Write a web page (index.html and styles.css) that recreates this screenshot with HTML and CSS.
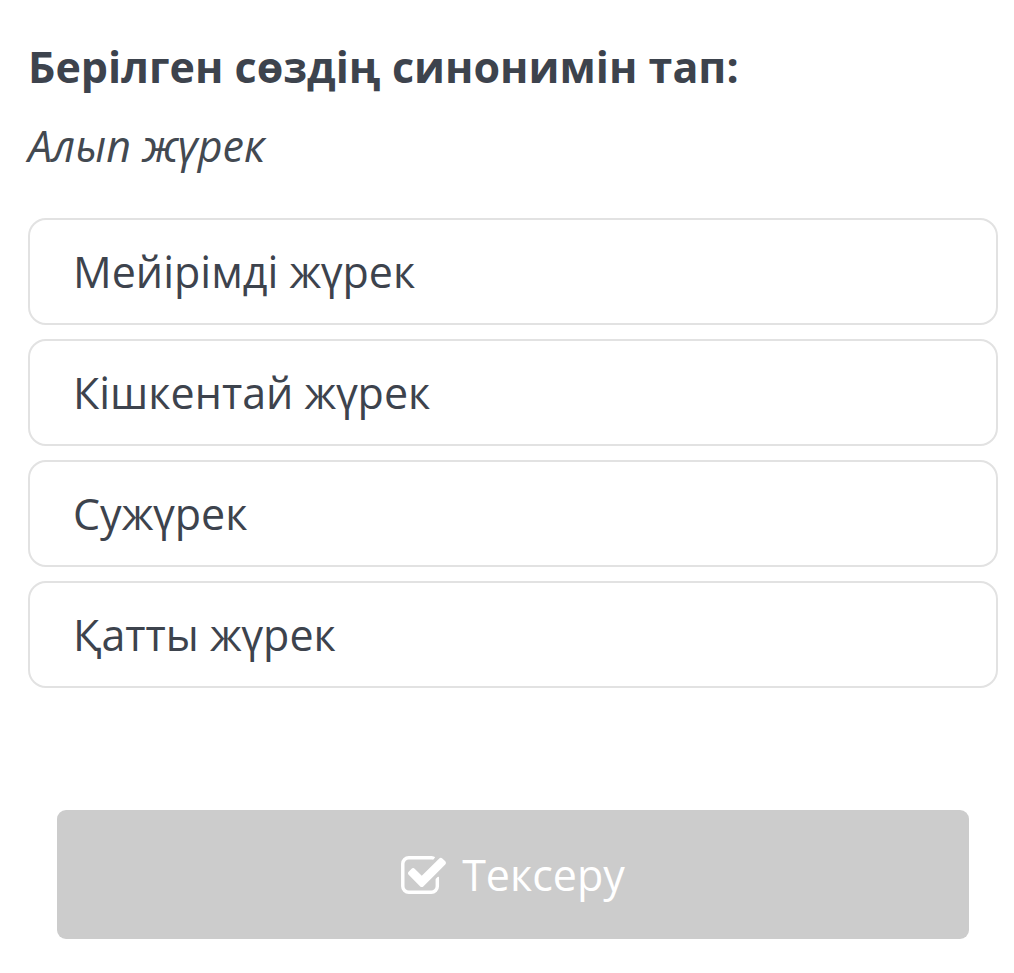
FILE: index.html
```html
<!DOCTYPE html>
<html lang="kk">
<head>
<meta charset="utf-8">
<link rel="stylesheet" href="styles.css">
</head>
<body>
<main class="quiz">
  <h1 class="title">Берілген сөздің синонимін тап:</h1>
  <p class="word">Алып жүрек</p>
  <ul class="options">
    <li class="option">Мейірімді жүрек</li>
    <li class="option">Кішкентай жүрек</li>
    <li class="option">Сужүрек</li>
    <li class="option">Қатты жүрек</li>
  </ul>
  <div class="actions">
    <button class="check" type="button">
      <svg class="check-icon" viewBox="64 128 1664 1408" width="45" height="38" aria-hidden="true">
        <path fill="#fff" d="M1472 930v318q0 119-84.5 203.5t-203.5 84.5h-832q-119 0-203.5-84.5t-84.5-203.5v-832q0-119 84.5-203.5t203.5-84.5h832q63 0 117 25 15 7 18 23 3 17-9 29l-49 49q-10 10-23 10-3 0-9-2-23-6-45-6h-832q-66 0-113 47t-47 113v832q0 66 47 113t113 47h832q66 0 113-47t47-113v-254q0-13 9-22l64-64q10-10 23-10 6 0 12 3 20 8 20 29zm231-489l-814 814q-24 24-57 24t-57-24l-430-430q-24-24-24-57t24-57l110-110q24-24 57-24t57 24l263 263 647-647q24-24 57-24t57 24l110 110q24 24 24 57t-24 57z"/>
      </svg>
      <span>Тексеру</span>
    </button>
  </div>
</main>
</body>
</html>
```
FILE: styles.css
```css
html, body {
  margin: 0;
  padding: 0;
  background: #ffffff;
}
body {
  font-family: "Open Sans", "Noto Sans", sans-serif;
  color: #3d434d;
}
.quiz {
  padding: 38px 16px 0 28px;
}
.title {
  margin: 0;
  font-size: 43px;
  font-weight: 700;
  line-height: 58px;
  color: #3d434d;
}
.word {
  margin: 21px 0 0;
  font-size: 43px;
  font-style: italic;
  font-weight: 400;
  line-height: 58px;
  color: #434951;
}
.options {
  list-style: none;
  margin: 43px 0 0;
  padding: 0;
  display: flex;
  flex-direction: column;
  gap: 14px;
}
.option {
  border: 2.5px solid #e2e2e2;
  border-radius: 18px;
  height: 107px;
  box-sizing: border-box;
  display: flex;
  align-items: center;
  padding: 0 43px;
  font-size: 43px;
  color: #3d434d;
}
.actions {
  margin: 122px 29px 0 29px;
}
.check {
  width: 100%;
  height: 129px;
  border: 0;
  border-radius: 9px;
  background: #cccccc;
  color: #ffffff;
  font-family: "Open Sans", "Noto Sans", sans-serif;
  font-size: 43px;
  display: flex;
  align-items: center;
  justify-content: center;
  gap: 16px;
  padding: 0;
}
.check-icon {
  display: block;
}
```
